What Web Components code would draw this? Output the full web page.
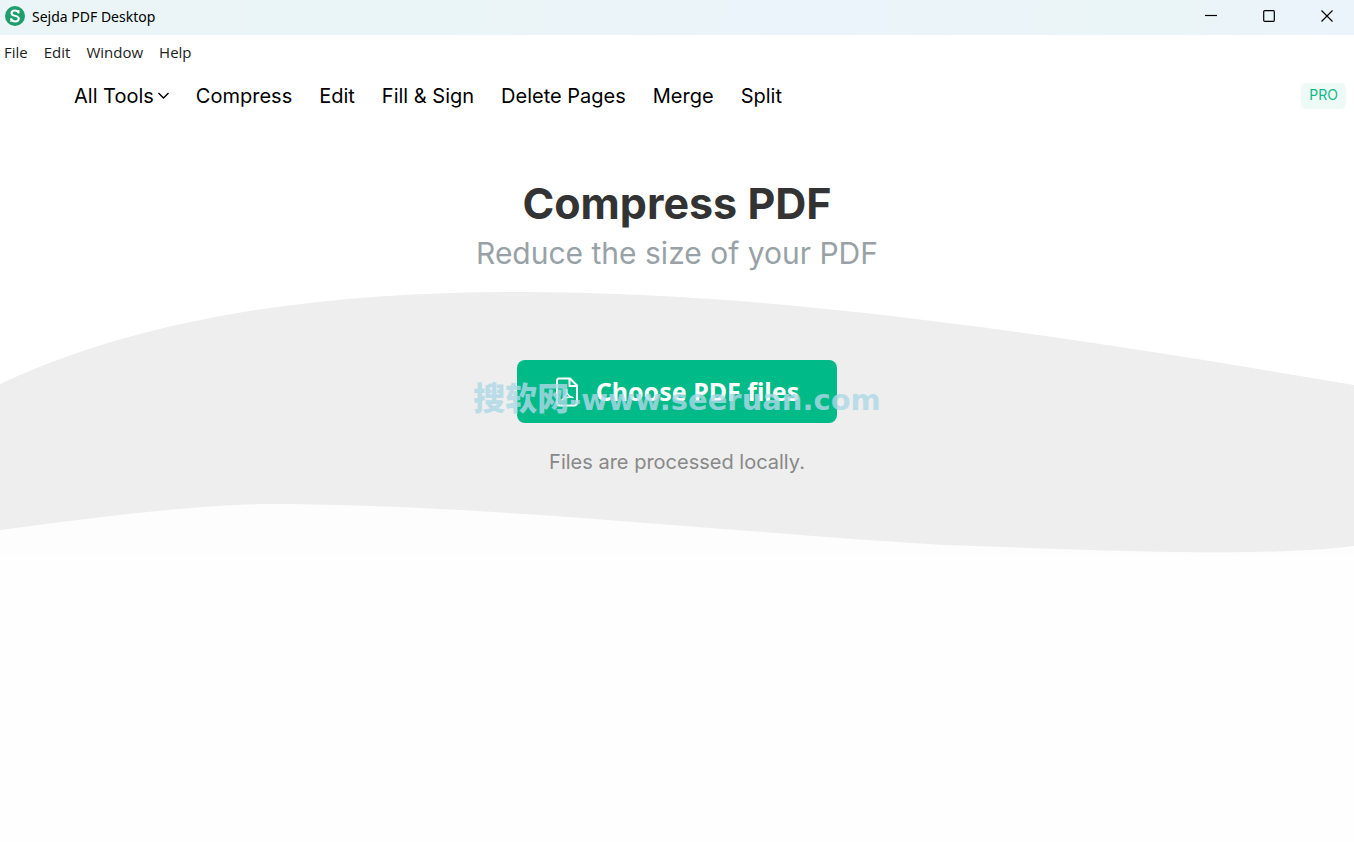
<!DOCTYPE html>
<html lang="en">
<head>
<meta charset="utf-8">
<title>Sejda PDF Desktop</title>
<style>
    body {
        margin: 0;
        min-height: 100vh;
        background: #fefefe;
        color: #000;
        font-family: Inter, "Noto Sans", sans-serif;
    }
</style>
</head>
<body>
<title-bar>Sejda PDF Desktop</title-bar>
<menu-bar></menu-bar>
<tools-nav></tools-nav>
<main>
    <page-header>
        <span slot="title">Compress PDF</span>
        <span slot="subtitle">Reduce the size of your PDF</span>
    </page-header>
    <wave-panel>
        <file-picker>Choose PDF files</file-picker>
        <span slot="note">Files are processed locally.</span>
    </wave-panel>
</main>

<script>
class BaseElement extends HTMLElement {
    constructor() {
        super();
        this.attachShadow({ mode: "open" });
    }

    // render
    connectedCallback() {
        const template = document.createElement("template");
        template.innerHTML = this.getStyle() + this.getTemplate();
        this.shadowRoot.appendChild(template.content.cloneNode(true));
    }
}

// window title and its buttons
class TitleBar extends BaseElement {
    getTemplate() {
        return `
        <svg class="logo" width="20" height="20" viewBox="0 0 20 20" aria-hidden="true">
            <circle cx="10" cy="10" r="10" fill="#1f9d6b"/>
            <path d="M13.5 7C13 5.4 11.7 4.6 10 4.6c-2 0-3.5 1-3.5 2.6 0 3.6 7.3 1.8 7.3 5.3 0 1.8-1.6 2.9-3.7 2.9-2 0-3.5-1-4-2.9" fill="none" stroke="#fff" stroke-width="2"/>
            <path d="M13.8 4v3.5M6 12.3V16" stroke="#fff" stroke-width="1.3"/>
        </svg>
        <span class="name"><slot></slot></span>
        <div class="controls">
            <button aria-label="Minimize"><svg width="12" height="12"><path d="M0 5.5h12"/></svg></button>
            <button aria-label="Maximize"><svg width="12" height="12"><rect x=".7" y=".7" width="10.6" height="10.6" rx="1"/></svg></button>
            <button aria-label="Close"><svg width="12" height="12"><path d="M.5.5l11 11M11.5.5l-11 11"/></svg></button>
        </div>
        `;
    }

    getStyle() {
        return `
        <style>
        :host {
            display: flex;
            align-items: center;
            height: 35px;
            padding-left: 5px;
            background: linear-gradient(100deg, #ebf5f8, #eaf5f7 30%, #ebf4fa 60%, #eaf5f7 85%, #ebf4fb);
            font: 14px/20px "Noto Sans", sans-serif;
        }
        .logo { margin: 0 7px 3px 0; }
        .name { flex: 1; padding-bottom: 2px; }
        .controls {
            display: flex;
            gap: 4px;
            align-self: flex-start;
        }
        button {
            display: flex;
            align-items: center;
            justify-content: center;
            width: 54px;
            height: 32px;
            padding: 0;
            border: 0;
            background: none;
        }
        button svg { fill: none; stroke: #000; stroke-width: 1.2; }
        </style>`;
    }
}

class MenuBar extends BaseElement {
    getTemplate() {
        return ["File", "Edit", "Window", "Help"].map(item => `<button>${item}</button>`).join("");
    }

    getStyle() {
        return `
        <style>
        :host {
            display: flex;
            gap: 16px;
            padding: 7px 4px 8px;
            background: #fff;
        }
        button {
            padding: 0;
            border: 0;
            background: none;
            color: #222;
            font: 15px/20px "Open Sans", "Noto Sans", sans-serif;
        }
        </style>`;
    }
}

class ToolsNav extends BaseElement {
    getTemplate() {
        const tools = ["Compress", "Edit", "Fill &amp; Sign", "Delete Pages", "Merge", "Split"];
        return `
        <nav>
            <button>All Tools
                <svg width="11" height="8" viewBox="0 0 11 8" aria-hidden="true"><path d="M.5 1l5 5 5-5"/></svg>
            </button>
            ${tools.map(tool => `<a href="#">${tool}</a>`).join("")}
        </nav>
        <span class="badge">PRO</span>
        `;
    }

    getStyle() {
        return `
        <style>
        :host {
            display: flex;
            align-items: center;
            justify-content: space-between;
            padding: 10px 8px 0 74px;
            background: #fff;
        }
        nav {
            display: flex;
            gap: 27px;
            font-size: 20px;
            line-height: 32px;
        }
        button {
            display: flex;
            align-items: center;
            gap: 4px;
            padding: 0;
            border: 0;
            background: none;
            color: inherit;
            font: inherit;
        }
        svg { fill: none; stroke: #000; stroke-width: 1.4; }
        a { color: inherit; text-decoration: none; }
        .badge {
            padding: 2px 8px 4px;
            border-radius: 5px;
            background: #edfaf6;
            color: #12b98a;
            font-size: 14px;
            line-height: 20px;
        }
        </style>`;
    }
}

class PageHeader extends BaseElement {
    getTemplate() {
        return `
        <h1><slot name="title"></slot></h1>
        <p><slot name="subtitle"></slot></p>
        `;
    }

    getStyle() {
        return `
        <style>
        :host {
            display: block;
            padding: 63px 16px 17px;
            background: #fff;
            text-align: center;
        }
        h1 {
            margin: 0;
            color: #333;
            font-size: 43px;
            line-height: 56px;
            font-weight: 700;
        }
        p {
            margin: 0;
            color: #98a2a6;
            font-size: 30px;
            line-height: 44px;
        }
        </style>`;
    }
}

class WavePanel extends BaseElement {
    getTemplate() {
        return `
        <svg viewBox="0 0 1354 264" preserveAspectRatio="none" aria-hidden="true">
            <path fill="#fff" d="M0 0H1354V180H0z"/>
            <path fill="#fdfdfd" d="M0 180H1354V264H0z"/>
            <path fill="#eee" d="M0 92C150 22 330 0 520 0C790 0 1080 47 1354 93V254C1260 266 1100 258 945 253C740 241 480 212 270 212C200 212 100 225 0 238z"/>
        </svg>
        <slot></slot>
        <p><slot name="note"></slot></p>
        `;
    }

    getStyle() {
        return `
        <style>
        :host {
            position: relative;
            display: flex;
            flex-direction: column;
            align-items: center;
            gap: 24px;
            padding: 68px 16px 78px;
        }
        svg {
            position: absolute;
            inset: 0;
            z-index: -1;
            width: 100%;
            height: 100%;
        }
        p {
            margin: 0;
            color: #888;
            font-size: 20px;
            line-height: 31px;
        }
        </style>`;
    }
}

class FilePicker extends BaseElement {
    getTemplate() {
        return `
        <button>
            <svg width="24" height="30" viewBox="0 0 24 30" aria-hidden="true">
                <path d="M4 1.5h11l7 7V26a2.5 2.5 0 0 1-2.5 2.5h-15A2.5 2.5 0 0 1 2 26V3.5a2 2 0 0 1 2-2zM14.5 1.5V9H22"/>
                <path d="M7 23c3.5-3 5.2-7.5 4.8-10.5-1.6 2 1.7 7.5 6.2 8-3.5-1-8-.2-11 2.5z" stroke-width="1.5"/>
            </svg>
            <slot></slot>
        </button>
        <div class="watermark"><span class="cjk">搜软网</span>-www.seeruan.com</div>
        `;
    }

    getStyle() {
        return `
        <style>
        :host {
            position: relative;
            display: block;
        }
        button {
            display: flex;
            align-items: center;
            justify-content: center;
            gap: 17px;
            min-width: 320px;
            padding: 12px 36px;
            border: 0;
            border-radius: 8px;
            background: #00ba88;
            color: #fff;
            font: 700 25px/39px "Noto Sans", sans-serif;
        }
        svg { fill: none; stroke: #fff; stroke-width: 2; stroke-linejoin: round; }
        /* translucent, lies over the button */
        .watermark {
            position: absolute;
            inset: 0 -100px;
            display: flex;
            align-items: baseline;
            justify-content: center;
            padding-top: 16px;
            color: rgba(173, 216, 230, .82);
            font: 700 29px/40px "DejaVu Sans", sans-serif;
            white-space: nowrap;
            pointer-events: none;
        }
        .cjk {
            font: 900 32px/40px "Noto Sans CJK SC", sans-serif;
        }
        </style>`;
    }
}

customElements.define("title-bar", TitleBar);
customElements.define("menu-bar", MenuBar);
customElements.define("tools-nav", ToolsNav);
customElements.define("page-header", PageHeader);
customElements.define("wave-panel", WavePanel);
customElements.define("file-picker", FilePicker);
</script>
</body>
</html>
